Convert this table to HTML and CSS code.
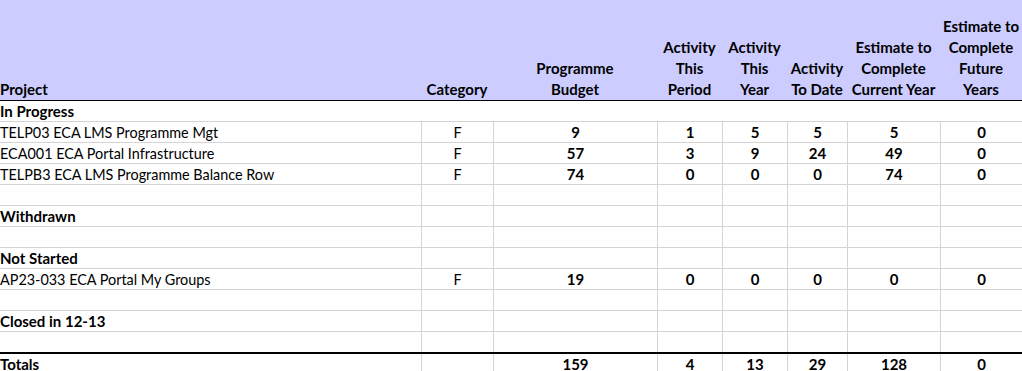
FILE: index.html
```html
<!DOCTYPE html>
<html>
<head>
<meta charset="utf-8">
<link rel="stylesheet" href="styles.css">
</head>
<body>
<div class="sheet">
  <div class="row head">
    <div class="cell left">Project</div>
    <div class="cell">Category</div>
    <div class="cell">Programme<br>Budget</div>
    <div class="cell">Activity<br>This<br>Period</div>
    <div class="cell">Activity<br>This<br>Year</div>
    <div class="cell">Activity<br>To Date</div>
    <div class="cell">Estimate to<br>Complete<br>Current Year</div>
    <div class="cell">Estimate to<br>Complete<br>Future<br>Years</div>
  </div>

  <div class="row section"><div class="cell left bold">In Progress</div></div>

  <div class="row">
    <div class="cell left">TELP03 ECA LMS Programme Mgt</div>
    <div class="cell">F</div>
    <div class="cell num">9</div>
    <div class="cell num">1</div>
    <div class="cell num">5</div>
    <div class="cell num">5</div>
    <div class="cell num">5</div>
    <div class="cell num">0</div>
  </div>
  <div class="row">
    <div class="cell left">ECA001 ECA Portal Infrastructure</div>
    <div class="cell">F</div>
    <div class="cell num">57</div>
    <div class="cell num">3</div>
    <div class="cell num">9</div>
    <div class="cell num">24</div>
    <div class="cell num">49</div>
    <div class="cell num">0</div>
  </div>
  <div class="row">
    <div class="cell left">TELPB3 ECA LMS Programme Balance Row</div>
    <div class="cell">F</div>
    <div class="cell num">74</div>
    <div class="cell num">0</div>
    <div class="cell num">0</div>
    <div class="cell num">0</div>
    <div class="cell num">74</div>
    <div class="cell num">0</div>
  </div>
  <div class="row">
    <div class="cell left"></div><div class="cell"></div><div class="cell"></div><div class="cell"></div>
    <div class="cell"></div><div class="cell"></div><div class="cell"></div><div class="cell"></div>
  </div>

  <div class="row">
    <div class="cell left bold">Withdrawn</div><div class="cell"></div><div class="cell"></div><div class="cell"></div>
    <div class="cell"></div><div class="cell"></div><div class="cell"></div><div class="cell"></div>
  </div>
  <div class="row">
    <div class="cell left"></div><div class="cell"></div><div class="cell"></div><div class="cell"></div>
    <div class="cell"></div><div class="cell"></div><div class="cell"></div><div class="cell"></div>
  </div>

  <div class="row">
    <div class="cell left bold">Not Started</div><div class="cell"></div><div class="cell"></div><div class="cell"></div>
    <div class="cell"></div><div class="cell"></div><div class="cell"></div><div class="cell"></div>
  </div>
  <div class="row">
    <div class="cell left">AP23-033 ECA Portal My Groups</div>
    <div class="cell">F</div>
    <div class="cell num">19</div>
    <div class="cell num">0</div>
    <div class="cell num">0</div>
    <div class="cell num">0</div>
    <div class="cell num">0</div>
    <div class="cell num">0</div>
  </div>
  <div class="row">
    <div class="cell left"></div><div class="cell"></div><div class="cell"></div><div class="cell"></div>
    <div class="cell"></div><div class="cell"></div><div class="cell"></div><div class="cell"></div>
  </div>

  <div class="row">
    <div class="cell left bold">Closed in 12-13</div><div class="cell"></div><div class="cell"></div><div class="cell"></div>
    <div class="cell"></div><div class="cell"></div><div class="cell"></div><div class="cell"></div>
  </div>
  <div class="row pre-total">
    <div class="cell left"></div><div class="cell"></div><div class="cell"></div><div class="cell"></div>
    <div class="cell"></div><div class="cell"></div><div class="cell"></div><div class="cell"></div>
  </div>

  <div class="row total">
    <div class="cell left bold">Totals</div>
    <div class="cell"></div>
    <div class="cell num">159</div>
    <div class="cell num">4</div>
    <div class="cell num">13</div>
    <div class="cell num">29</div>
    <div class="cell num">128</div>
    <div class="cell num">0</div>
  </div>
</div>
</body>
</html>
```

FILE: styles.css
```css
html, body {
  margin: 0;
  padding: 0;
  background: #ffffff;
}

body {
  font-family: "Lato", "Liberation Sans", sans-serif;
  font-size: 14.4px;
  color: #000000;
  overflow: hidden;
}

.sheet {
  width: 1022px;
}

.row {
  display: grid;
  grid-template-columns: 421px 72px 164px 65px 65px 60px 93px 82px;
  height: 21px;
  box-sizing: border-box;
  border-bottom: 1px solid #d4d4d4;
}

.cell {
  box-sizing: border-box;
  border-left: 1px solid #d4d4d4;
  text-align: center;
  line-height: 21px;
  white-space: nowrap;
  overflow: visible;
}

.cell.left {
  border-left: none;
  text-align: left;
}

.row.head {
  height: 101px;
  background: #ccccff;
  border-bottom: 1px solid #000000;
  align-items: end;
}

.row.head .cell {
  border-left: none;
  font-weight: 700;
  font-size: 15px;
  line-height: 21px;
}

.row.section {
  grid-template-columns: 1022px;
}

.bold,
.num {
  font-weight: 700;
  font-size: 15px;
}

.row.pre-total {
  height: 22px;
  border-bottom: 2px solid #000000;
}

.row.total {
  border-bottom: none;
}
```
